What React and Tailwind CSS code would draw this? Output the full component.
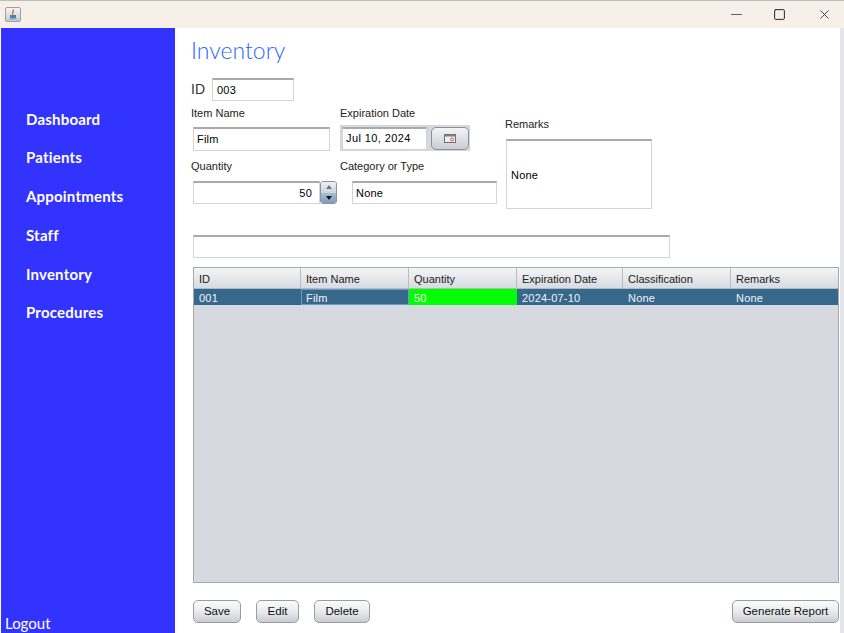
import React from 'react';
import {Minus, Square, X} from 'lucide-react';

const navItems = [
  ['Dashboard', 'mb-[19px]'],
  ['Patients', 'mb-[20px]'],
  ['Appointments', 'mb-[20px]'],
  ['Staff', 'mb-[20px]'],
  ['Inventory', 'mb-[19px]'],
  ['Procedures', '']
];

const columns = [
  ['ID', 'w-[107px]'],
  ['Item Name', 'w-[108px]'],
  ['Quantity', 'w-[108px]'],
  ['Expiration Date', 'w-[106px]'],
  ['Classification', 'w-[108px]'],
  ['Remarks', 'flex-1']
];

const fieldClass =
  'flex items-center bg-white border border-[#d4d4d4] border-t-2 border-t-[#a9a9a9] text-[11px] tracking-[0.2px] text-black';

const labelClass = 'h-[20px] leading-[20px] text-[11px] text-[#222]';

const JavaButton = ({label, className = ''}) => (
  <button
    type="button"
    className={`h-[23px] pt-px rounded-[5px] border border-[#9a9da3] bg-gradient-to-b from-[#fbfbfc] via-[#e9ebee] to-[#c9ccd2] text-[11.5px] text-[#111] ${className}`}>
    {label}
  </button>
);

const Sidebar = () => (
  <aside className="w-[174px] ml-px bg-[#3333ff] flex flex-col text-white font-['Lato',sans-serif]">
    <nav className="pt-[82px] pl-[25px] flex-1">
      {navItems.map(([label, mb]) => (
        <div
          key={label}
          className={`h-[19px] leading-[19px] text-[15px] font-bold tracking-[0.2px] ${mb}`}>
          {label}
        </div>
      ))}
    </nav>
    <div className="pl-[4px] h-[19px] leading-[19px] text-[15px]">Logout</div>
  </aside>
);

const TitleBar = () => (
  <header className="h-[28px] bg-[#f6f0e9] border-t border-[#bdbdbd] flex items-center">
    <div className="ml-[5px] w-[16px] h-[15px] rounded-[2px] border border-[#9aa0a6] bg-gradient-to-b from-[#f4f4f4] to-[#c8ccd2] flex items-center justify-center">
      <svg width="10" height="11" viewBox="0 0 10 11">
        <path d="M5 0.500C6.500 2 3.500 3 5 5.500" stroke="#e0742a" strokeWidth="1.500" fill="none" />
        <path d="M2 6h6v2c0 1-1 1.500-3 1.500S2 9 2 8z" fill="#4f7fb0" />
        <path d="M1 10h8" stroke="#7d95ad" strokeWidth="0.800" />
      </svg>
    </div>
    <div className="ml-auto flex items-center text-[#222]">
      <Minus size={17} strokeWidth={1} className="mr-[28px]" />
      <Square size={13} strokeWidth={1.8} className="mr-[31px]" />
      <X size={15} strokeWidth={1.3} className="mr-[12px]" />
    </div>
  </header>
);

const InventoryForm = () => (
  <section className="font-['Liberation_Sans',sans-serif]">
    <h1 className="pl-[16px] pt-[8px] h-[50px] text-[23px] leading-[29px] text-[#2f66ff] font-['Lato',sans-serif] font-light">
      Inventory
    </h1>
    <div className="pl-[16px] h-[23px] flex items-center">
      <span className="w-[21px] text-[14px] text-[#333]">ID</span>
      <div className={`${fieldClass} w-[82px] h-[23px] pl-[4px]`}>003</div>
    </div>
    <div className="flex mt-[2px]">
      <div className="w-[165px] pl-[16px]">
        <div className={labelClass}>Item Name</div>
        <div className={`${fieldClass} ml-[2px] mt-[4px] w-[137px] h-[24px] pl-[3px]`}>Film</div>
        <div className={`${labelClass} mt-[5px]`}>Quantity</div>
        <div className="mt-[5px] ml-[2px] flex items-stretch h-[23px]">
          <div className={`${fieldClass} w-[127px] justify-end pr-[7px]`}>50</div>
          <div className="w-[17px] flex flex-col rounded-[3px] border border-[#8794a3] overflow-hidden">
            <div className="flex-1 bg-gradient-to-b from-[#eef1f4] to-[#ccd3db] flex items-center justify-center">
              <div className="w-0 h-0 border-x-[3px] border-x-transparent border-b-[4px] border-b-[#6d7680]" />
            </div>
            <div className="flex-1 bg-gradient-to-b from-[#a9bdd2] to-[#7f9cb9] flex items-center justify-center">
              <div className="w-0 h-0 border-x-[3px] border-x-transparent border-t-[4px] border-t-[#111]" />
            </div>
          </div>
        </div>
      </div>
      <div className="w-[165px]">
        <div className={labelClass}>Expiration Date</div>
        <div className="mt-[2px] w-[130px] h-[26px] bg-[#d5d9df] flex items-center pl-[2px]">
          <div className={`${fieldClass} w-[85px] h-[23px] pl-[3px] tracking-[0.4px]`}>Jul 10, 2024</div>
          <button
            type="button"
            className="ml-[4px] w-[38px] h-[23px] rounded-[5px] border border-[#8d9096] bg-gradient-to-b from-[#f3f4f6] to-[#c9cdd3] flex items-center justify-center">
            <svg width="12" height="9" viewBox="0 0 12 9">
              <rect x="0.500" y="0.500" width="11" height="8" fill="#f4efe9" stroke="#6b6f75" />
              <rect x="0.500" y="0.500" width="11" height="2" fill="#7b8087" />
              <circle cx="8" cy="5.500" r="1.500" fill="none" stroke="#e05050" />
            </svg>
          </button>
        </div>
        <div className={`${labelClass} mt-[5px]`}>Category or Type</div>
        <div className={`${fieldClass} mt-[5px] ml-[12px] w-[145px] h-[23px] pl-[3px]`}>None</div>
      </div>
      <div className="pt-[11px]">
        <div className={labelClass}>Remarks</div>
        <div className={`${fieldClass} mt-[5px] ml-px w-[146px] h-[70px] pl-[4px] pt-px`}>None</div>
      </div>
    </div>
    <div className={`${fieldClass} mt-[26px] ml-[18px] w-[477px] h-[23px]`} />
  </section>
);

const InventoryTable = () => (
  <section className="mt-[9px] ml-[18px] w-[646px] h-[316px] border border-[#a6a9ae] bg-[#d6d9e0] font-['Liberation_Sans',sans-serif] text-[11px]">
    <div className="flex h-[21px] bg-gradient-to-b from-[#f4f5f7] to-[#d8dbe1] border-b border-[#b4b7bd] text-[#222]">
      {columns.map(([label, width]) => (
        <div key={label} className={`${width} pl-[5px] leading-[23px] border-r border-[#b9bcc2] last:border-r-0`}>
          {label}
        </div>
      ))}
    </div>
    <div className="flex h-[16px] leading-[18px] bg-[#36688c] text-[#f2f5f8] tracking-[0.2px]">
      <div className="w-[107px] pl-[5px]">001</div>
      <div className="w-[108px] pl-[4px] border border-[#6b9ac4] leading-[16px]">Film</div>
      <div className="w-[108px] pl-[5px] bg-[#00ff00] text-white">50</div>
      <div className="w-[106px] pl-[5px]">2024-07-10</div>
      <div className="w-[108px] pl-[5px]">None</div>
      <div className="flex-1 pl-[5px]">None</div>
    </div>
  </section>
);

export default function App() {
  return (
    <div className="w-[844px] h-[633px] overflow-hidden bg-white flex flex-col">
      <TitleBar />
      <div className="flex flex-1 min-h-0">
        <Sidebar />
        <main className="flex-1 flex flex-col min-w-0">
          <InventoryForm />
          <InventoryTable />
          <div className="mt-[17px] pl-[18px] flex items-center font-['Liberation_Sans',sans-serif]">
            <JavaButton label="Save" className="w-[48px]" />
            <JavaButton label="Edit" className="w-[43px] ml-[15px]" />
            <JavaButton label="Delete" className="w-[56px] ml-[15px]" />
            <JavaButton label="Generate Report" className="w-[107px] ml-auto mr-[1px]" />
          </div>
        </main>
        <div className="w-[4px] bg-[#e3e5eb]" />
      </div>
    </div>
  );
}
